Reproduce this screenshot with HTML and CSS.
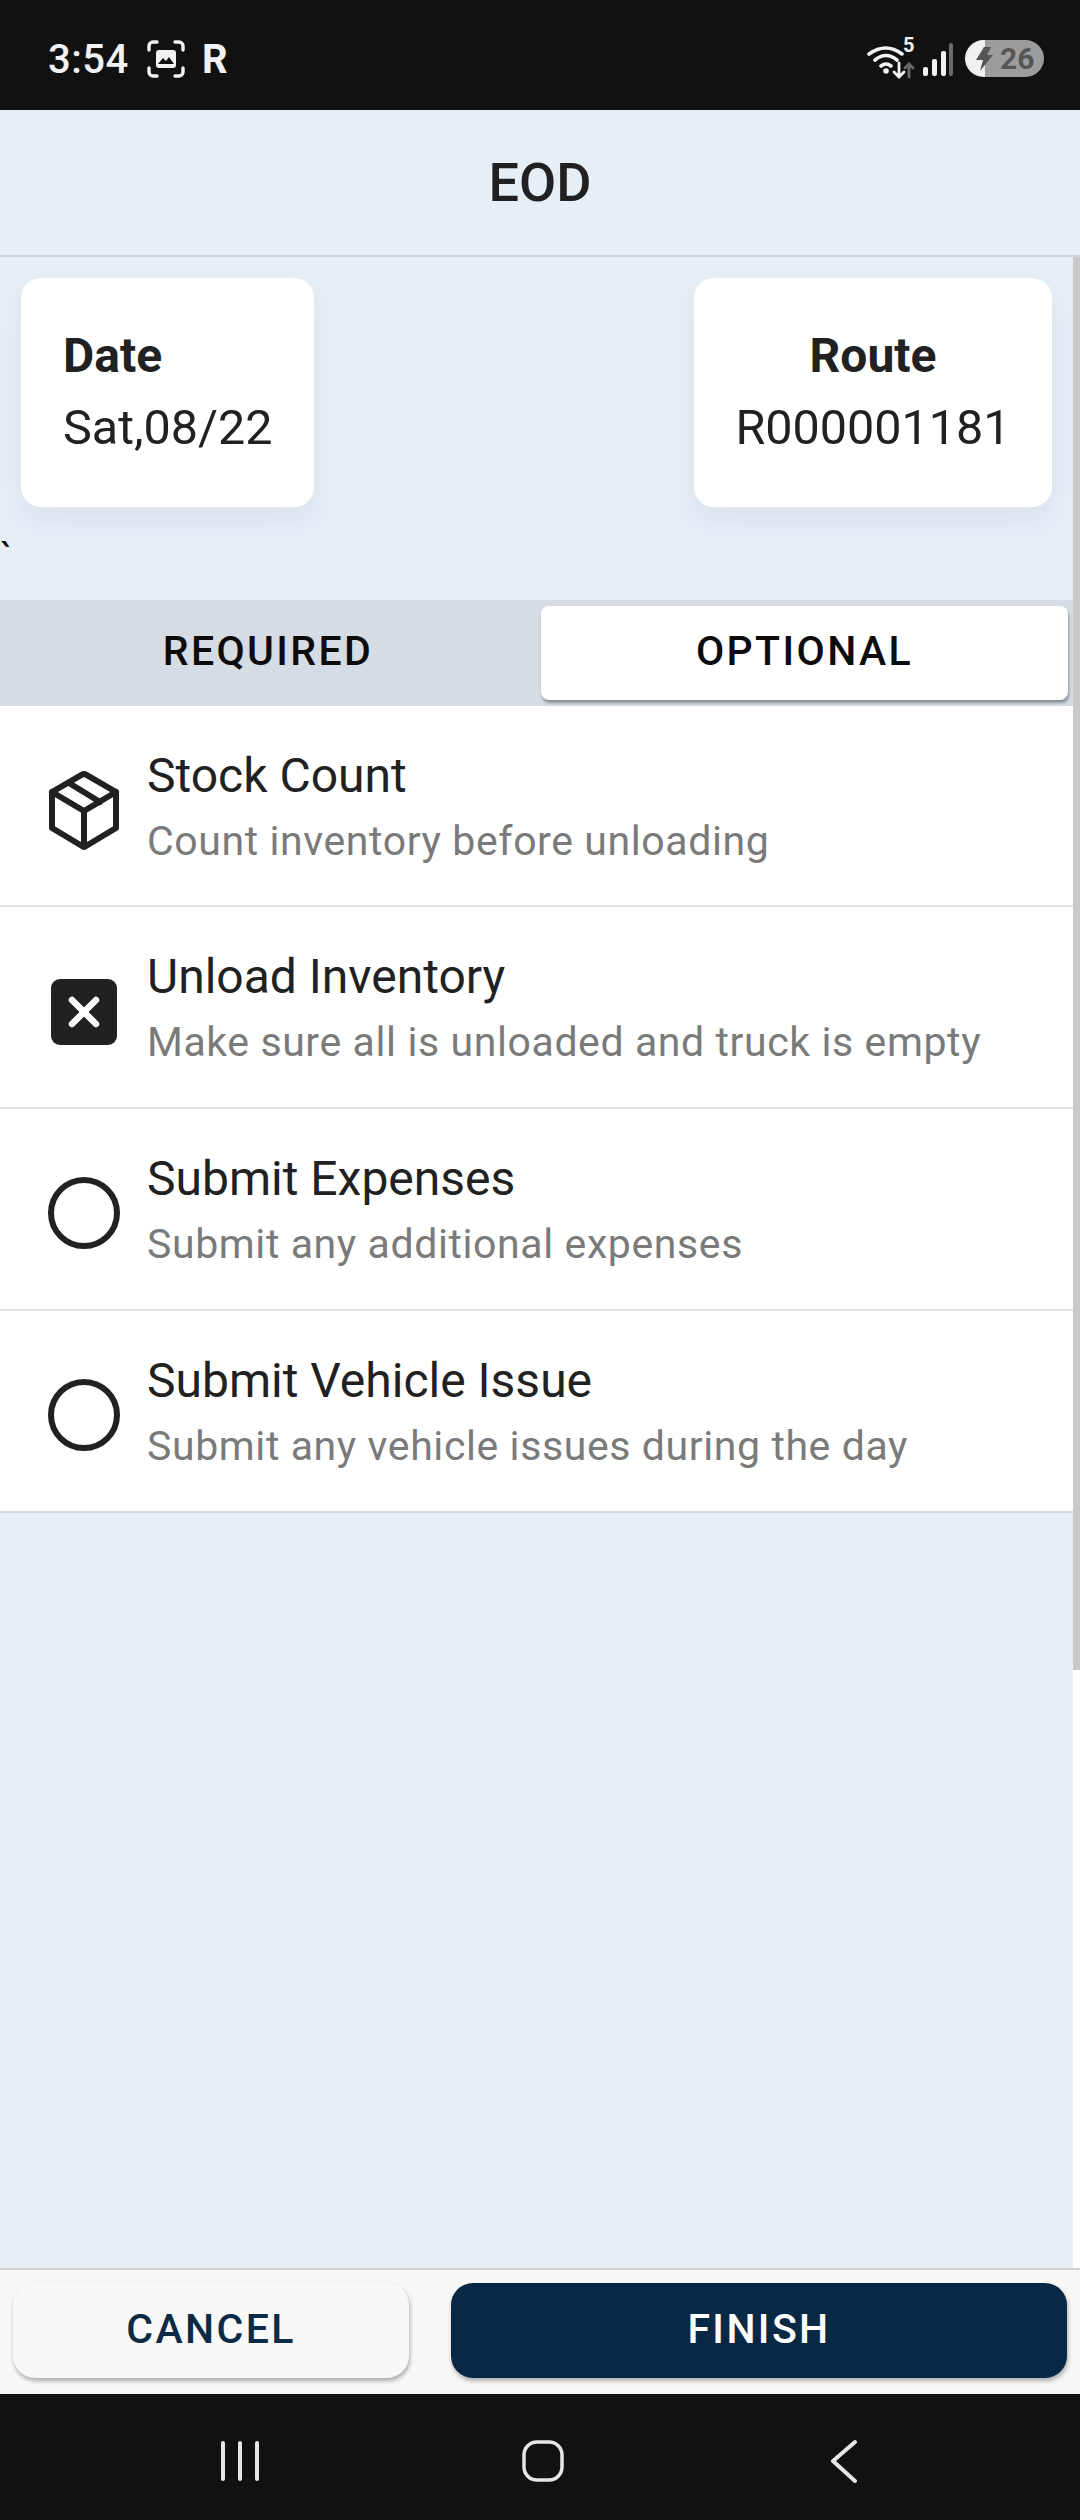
FILE: index.html
```html
<!DOCTYPE html>
<html lang="en">
<head>
<meta charset="utf-8">
<title>EOD</title>
<link rel="stylesheet" href="styles.css">
</head>
<body>
<div class="app">
  <div class="statusbar">
    <div class="status-left">
      <span class="clock">3:54</span>
      <svg class="shot-icon" width="38" height="38" viewBox="0 0 38 38" fill="none" stroke="#f2f2f2" stroke-width="3.4" stroke-linecap="round">
        <path d="M2 10V6a4 4 0 0 1 4-4h4M28 2h4a4 4 0 0 1 4 4v4M36 28v4a4 4 0 0 1-4 4h-4M10 36H6a4 4 0 0 1-4-4v-4"/>
        <rect x="9" y="10" width="20" height="18" rx="3" fill="#f2f2f2" stroke="none"/>
        <path d="M11 24l5-6 3 3 3-4 5 7z" fill="#111" stroke="none"/>
      </svg>
      <span class="r-mark">R</span>
    </div>
    <div class="status-right">
      <div class="wifi">
        <svg width="48" height="34" viewBox="0 0 48 34" fill="none" stroke="#f2f2f2" stroke-width="3.6" stroke-linecap="round">
          <path d="M2 9Q19-3 35 9M8 15Q19 6 30 15M14 21Q19 17 24 21"/>
          <circle cx="19" cy="26" r="2.8" fill="#f2f2f2" stroke="none"/>
          <path d="M32 18v14M27 27l5 5 5-5" stroke-width="2.8"/>
          <path d="M42 32V19M38 23l4-4 4 4" stroke="#6b6b6b" stroke-width="2.8"/>
        </svg>
        <span class="wifi-five">5</span>
      </div>
      <svg class="signal" width="32" height="34" viewBox="0 0 32 34">
        <rect x="1" y="24" width="5" height="9" rx="2" fill="#f2f2f2"/>
        <rect x="10" y="16" width="5" height="17" rx="2" fill="#f2f2f2"/>
        <rect x="19" y="8" width="5" height="25" rx="2" fill="#f2f2f2"/>
        <rect x="27" y="0" width="4" height="33" rx="2" fill="#6b6b6b"/>
      </svg>
      <div class="battery">
        <svg class="bolt" width="18" height="24" viewBox="0 0 18 24"><path d="M9 0h7l-4 8h6L5 24l3-11H1z" fill="#555"/></svg>
        <span class="battery-num">26</span>
      </div>
    </div>
  </div>

  <header class="title-bar"><h1>EOD</h1></header>

  <main class="content">
    <div class="cards">
      <section class="card card-date">
        <div class="card-label">Date</div>
        <div class="card-value">Sat,08/22</div>
      </section>
      <section class="card card-route">
        <div class="card-label">Route</div>
        <div class="card-value">R000001181</div>
      </section>
    </div>
    <div class="stray">`</div>
    <div class="tabs">
      <div class="tab tab-required">REQUIRED</div>
      <div class="tab tab-active">OPTIONAL</div>
    </div>
    <ul class="tasks">
      <li class="task">
        <span class="task-icon">
          <svg width="76" height="80" viewBox="0 0 76 80" fill="none" stroke="#212121" stroke-width="6" stroke-linejoin="round" stroke-linecap="round">
            <path d="M38 4a4 4 0 0 1 2 .6L70 22v36L40 76a4 4 0 0 1-4 0L6 58V22L36 4.600a4 4 0 0 1 2-.6z"/>
            <path d="M6 22l32 19 32-19M38 41v36M23 13l31 19"/>
          </svg>
        </span>
        <div class="task-text">
          <div class="task-title">Stock Count</div>
          <div class="task-sub">Count inventory before unloading</div>
        </div>
      </li>
      <li class="task">
        <span class="task-icon">
          <svg class="x-box" width="66" height="66" viewBox="0 0 66 66">
            <rect width="66" height="66" rx="9" fill="#212121"/>
            <path d="M21 21l24 24M45 21L21 45" stroke="#fff" stroke-width="6.500" stroke-linecap="round"/>
          </svg>
        </span>
        <div class="task-text">
          <div class="task-title">Unload Inventory</div>
          <div class="task-sub">Make sure all is unloaded and truck is empty</div>
        </div>
      </li>
      <li class="task">
        <span class="task-icon"><span class="circle"></span></span>
        <div class="task-text">
          <div class="task-title">Submit Expenses</div>
          <div class="task-sub">Submit any additional expenses</div>
        </div>
      </li>
      <li class="task">
        <span class="task-icon"><span class="circle"></span></span>
        <div class="task-text">
          <div class="task-title">Submit Vehicle Issue</div>
          <div class="task-sub">Submit any vehicle issues during the day</div>
        </div>
      </li>
    </ul>
    <div class="scrollbar"></div>
  </main>

  <footer class="actions">
    <button class="btn btn-cancel">CANCEL</button>
    <button class="btn btn-finish">FINISH</button>
  </footer>

  <nav class="navbar">
    <svg width="40" height="42" viewBox="0 0 40 42" stroke="#e6e6e6" stroke-width="4" stroke-linecap="round"><path d="M3 3v36M20 3v36M37 3v36"/></svg>
    <svg class="nav-home" width="42" height="42" viewBox="0 0 42 42" fill="none" stroke="#e6e6e6" stroke-width="3.500"><rect x="2" y="2" width="38" height="38" rx="13"/></svg>
    <svg class="nav-back" width="28" height="44" viewBox="0 0 28 44" fill="none" stroke="#e6e6e6" stroke-width="4" stroke-linecap="round" stroke-linejoin="round"><path d="M25 3L3 22l22 20"/></svg>
  </nav>
</div>
</body>
</html>
```
FILE: styles.css
```css
* { box-sizing: border-box; }
html, body { margin: 0; padding: 0; background: #fff; }
body { font-family: Roboto, "Liberation Sans", sans-serif; color: #212121; }
.app { width: 1080px; height: 2520px; display: flex; flex-direction: column; overflow: hidden; }

.statusbar { height: 110px; background: #111; color: #f2f2f2; display: flex; justify-content: space-between; align-items: center; padding: 8px 36px 0 48px; flex: none; }
.status-left { display: flex; align-items: center; }
.clock { font-size: 40px; font-weight: 500; width: 100px; letter-spacing: .5px; }
.shot-icon { margin-left: -1px; }
.r-mark { font-size: 40px; font-weight: 700; margin-left: 17px; }
.status-right { display: flex; align-items: center; }
.wifi { position: relative; width: 48px; height: 34px; margin-top: 6px; }
.wifi-five { position: absolute; left: 36px; top: -12px; font-size: 20px; font-weight: 700; }
.signal { margin-left: 7px; margin-top: 2px; }
.battery { width: 79px; height: 37px; margin-left: 11px; border-radius: 19px; background: linear-gradient(90deg, #f0f0f0 0 20px, #9c9c9c 20px); display: flex; align-items: center; padding-left: 10px; margin-top: -1px; }
.battery-num { font-size: 30px; font-weight: 700; color: #555; margin-left: 7px; }

.title-bar { height: 147px; background: #e6eef6; border-bottom: 2px solid #cfd6de; display: flex; align-items: center; justify-content: center; flex: none; }
.title-bar h1 { margin: 0; font-size: 54px; font-weight: 500; color: #212121; }

.content { position: relative; flex: 1; width: 1073px; background: #e6eef6; padding-top: 21px; }
.cards { display: flex; justify-content: space-between; padding: 0 21px; }
.card { height: 229px; background: #fff; border-radius: 20px; box-shadow: 0 14px 30px rgba(60, 80, 110, .07); padding: 0 42px 2px; display: flex; flex-direction: column; justify-content: center; }
.card-date { width: 293px; }
.card-route { width: 358px; align-items: center; }
.card-label { font-size: 48px; font-weight: 700; line-height: 72px; }
.card-value { font-size: 48.500px; font-weight: 400; line-height: 72px; }
.stray { height: 93px; font-size: 40px; line-height: 76px; padding-top: 14px; color: #111; }

.tabs { height: 106px; background: #d5dce4; display: flex; padding: 6px 5px 6px 0; }
.tab { display: flex; align-items: center; justify-content: center; font-size: 41px; font-weight: 500; letter-spacing: 2.4px; color: #0c0c0c; padding-bottom: 4px; }
.tab-required { width: 541px; flex: none; padding-right: 5px; }
.tab-active { flex: 1; background: #fff; border-radius: 8px; box-shadow: 1px 3px 3px rgba(0, 0, 0, .35); }

.tasks { list-style: none; margin: 0; padding: 0; background: #fff; border-bottom: 2px solid #d5d9dd; }
.task { height: 202px; display: flex; align-items: center; border-bottom: 2px solid #e2e2e2; padding-left: 46px; }
.task:first-child { height: 201px; }
.task:last-child { border-bottom: 0; height: 200px; }
.task-icon { width: 76px; height: 80px; display: flex; align-items: center; justify-content: center; margin-right: 25px; margin-top: 8px; flex: none; }
.x-box { margin-top: 2px; }
.circle { width: 72px; height: 72px; border: 6px solid #212121; border-radius: 50%; display: block; }
.task-text { display: flex; flex-direction: column; margin-top: 2px; }
.task-title { font-size: 48px; line-height: 68px; color: #212121; }
.task-sub { font-size: 41px; line-height: 62px; color: #7a7a7a; letter-spacing: .6px; }

.scrollbar { position: absolute; right: -7px; top: 0; width: 7px; height: 1413px; background: #c9c9c9; }

.actions { height: 126px; background: #f7f7f7; border-top: 2px solid #d0d0d0; display: flex; padding: 13px 13px 12px; justify-content: space-between; flex: none; }
.btn { border: 0; height: 95px; padding: 0 0 4px; border-radius: 22px; font-family: inherit; font-size: 41px; font-weight: 500; letter-spacing: 2.4px; box-shadow: 1px 3px 4px rgba(0, 0, 0, .3); }
.btn-cancel { width: 396px; background: #f8f8f8; color: #0a2a45; }
.btn-finish { width: 616px; background: #072945; color: #fff; }

.navbar { height: 126px; background: #111; flex: none; display: flex; align-items: center; padding: 8px 0 0 220px; }
.nav-home { margin-left: 262px; }
.nav-back { margin-left: 266px; }
```
